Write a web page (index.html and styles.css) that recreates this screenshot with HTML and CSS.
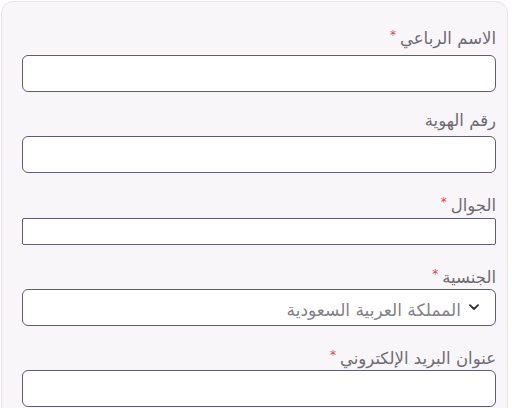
FILE: index.html
```html
<!DOCTYPE html>
<html lang="ar" dir="rtl">
<head>
<meta charset="utf-8">
<link rel="stylesheet" href="styles.css">
</head>
<body>
<form class="card">
  <div class="field">
    <label class="label">الاسم الرباعي<span class="req">*</span></label>
    <input class="input" type="text">
  </div>
  <div class="field">
    <label class="label">رقم الهوية</label>
    <input class="input" type="text">
  </div>
  <div class="field">
    <label class="label">الجوال<span class="req">*</span></label>
    <input class="input input-phone" type="text">
  </div>
  <div class="field">
    <label class="label">الجنسية<span class="req">*</span></label>
    <div class="input select">
      <span class="select-text">المملكة العربية السعودية</span>
      <svg class="chevron" width="10" height="7" viewBox="0 0 10 7"><path d="M1 1.2 L5 5 L9 1.2" fill="none" stroke="#2e2b33" stroke-width="1.8" stroke-linecap="round" stroke-linejoin="round"/></svg>
    </div>
  </div>
  <div class="field">
    <label class="label">عنوان البريد الإلكتروني<span class="req">*</span></label>
    <input class="input" type="email">
  </div>
</form>
</body>
</html>
```
FILE: styles.css
```css
html, body {
  margin: 0;
  padding: 0;
  background: #ffffff;
  height: 408px;
  overflow: hidden;
}
body {
  font-family: "DejaVu Sans", sans-serif;
}
.card {
  box-sizing: border-box;
  margin: 1px 4px 0 1px;
  height: 460px;
  background: #f8f6f8;
  border: 1px solid #e6e3e7;
  border-radius: 12px;
  padding: 23px 11px 0 20px;
}
.field {
  display: flex;
  flex-direction: column;
  margin-bottom: 19px;
}
.label {
  display: block;
  height: 20px;
  line-height: 20px;
  font-size: 16.5px;
  color: #6e6a72;
  margin-bottom: 5px;
}
.field:first-child .label {
  margin-bottom: 10px;
}
.req {
  color: #e5404a;
  font-size: 12px;
  font-weight: 400;
  vertical-align: 5px;
  margin-right: 4px;
}
.input {
  box-sizing: border-box;
  width: 474px;
  height: 37px;
  border: 1px solid #625b76;
  border-radius: 6px;
  background: #ffffff;
  margin: 0;
  font: inherit;
}
.input-phone {
  height: 27px;
  border-radius: 2px;
  margin-top: 1px;
}
.select {
  display: flex;
  align-items: center;
  padding: 0 16px 0 0;
  gap: 8px;
}
.select-text {
  order: 2;
  font-size: 17px;
  color: #858089;
  margin-top: 4px;
}
.chevron {
  order: 1;
  display: block;
}
```
